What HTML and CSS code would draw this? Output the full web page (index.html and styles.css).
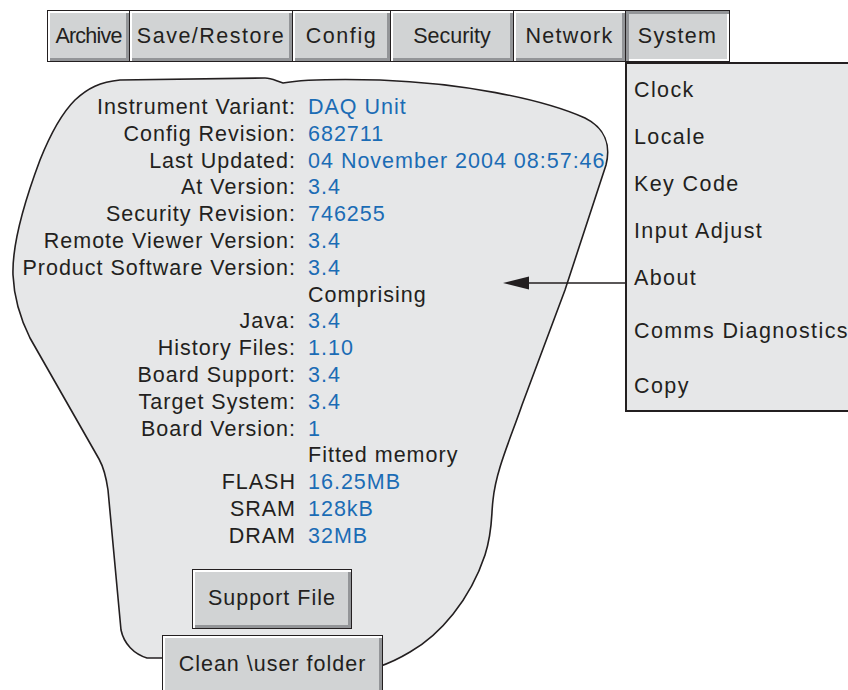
FILE: index.html
```html
<!DOCTYPE html>
<html lang="en">
<head>
  <meta charset="UTF-8">
  <meta name="viewport" content="width=device-width, initial-scale=1.0">
  <title>System - About</title>
  <link rel="stylesheet" href="styles.css">
</head>
<body>
  <div class="screen">
    <!-- callout shape and arrow drawn behind the page content -->
    <svg class="callout" width="848" height="690" viewBox="0 0 848 690">
      <path class="blob" d="M166,658 L147,658 C134,654 124,644 121,630 L108,490 C106,476 104,468 99,459 L30,338 C20,318 14,298 13,275 C12,245 25,200 40,160 C50,135 60,115 75,100 C88,88 100,82 120,80 L265,78 C272,78 276,81 283,83 C300,80 340,79 380,80 C460,83 540,98 585,118 C605,128 611,145 606,165 L565,290 L522,405 C510,440 496,470 493,500 C491,515 493,530 485,555 C470,600 440,635 410,652 C400,658 390,663 378,667 L378,690 L166,690 Z"/>
      <line class="arrow-line" x1="520" y1="283" x2="626" y2="283"/>
      <polygon class="arrow-head" points="503,283 529,276.5 529,289.5"/>
    </svg>

    <nav class="tabs">
      <div class="tab tab-archive">Archive</div>
      <div class="tab tab-save">Save/Restore</div>
      <div class="tab tab-config">Config</div>
      <div class="tab tab-security">Security</div>
      <div class="tab tab-network">Network</div>
      <div class="tab tab-system active">System</div>
    </nav>

    <ul class="menu">
      <li>Clock</li>
      <li>Locale</li>
      <li>Key Code</li>
      <li>Input Adjust</li>
      <li>About</li>
      <li class="comms">Comms Diagnostics</li>
      <li class="copy">Copy</li>
    </ul>

    <main class="about">
      <dl class="info">
        <dt>Instrument Variant:</dt><dd>DAQ Unit</dd>
        <dt>Config Revision:</dt><dd>682711</dd>
        <dt>Last Updated:</dt><dd>04 November 2004 08:57:46</dd>
        <dt>At Version:</dt><dd>3.4</dd>
        <dt>Security Revision:</dt><dd>746255</dd>
        <dt>Remote Viewer Version:</dt><dd>3.4</dd>
        <dt>Product Software Version:</dt><dd>3.4</dd>
        <dt></dt><dd class="heading">Comprising</dd>
        <dt>Java:</dt><dd>3.4</dd>
        <dt>History Files:</dt><dd>1.10</dd>
        <dt>Board Support:</dt><dd>3.4</dd>
        <dt>Target System:</dt><dd>3.4</dd>
        <dt>Board Version:</dt><dd>1</dd>
        <dt></dt><dd class="heading">Fitted memory</dd>
        <dt>FLASH</dt><dd>16.25MB</dd>
        <dt>SRAM</dt><dd>128kB</dd>
        <dt>DRAM</dt><dd>32MB</dd>
      </dl>

      <div class="actions">
        <button class="btn btn-support">Support File</button>
        <button class="btn btn-clean">Clean \user folder</button>
      </div>
    </main>
  </div>
</body>
</html>
```

FILE: styles.css
```css
body {
  margin: 0;
  padding: 0;
  background: #ffffff;
  font-family: "Liberation Sans", Arial, sans-serif;
  color: #231f20;
  overflow: hidden;
}

.screen {
  position: relative;
  z-index: 0;
  width: 848px;
  height: 690px;
  overflow: hidden;
  font-size: 21.5px;
  letter-spacing: 1px;
}

/* callout */
.callout {
  position: absolute;
  top: 0;
  left: 0;
  z-index: -1;
}

.blob {
  fill: #e6e7e8;
  stroke: #231f20;
  stroke-width: 1.6;
}

.arrow-line {
  stroke: #231f20;
  stroke-width: 1.6;
}

.arrow-head {
  fill: #231f20;
}

/* tab bar */
.tabs {
  display: flex;
  margin-left: 47px;
  padding-top: 10px;
  height: 52px;
}

.tab {
  box-sizing: border-box;
  height: 52px;
  border: 1px solid #231f20;
  background: #d1d3d4;
  box-shadow: inset 2px 2px 0 #ffffff, inset -3px -3px 0 #939598;
  display: flex;
  align-items: center;
  justify-content: center;
  letter-spacing: 1.2px;
  margin-left: -1px;
}

.tab:first-child {
  margin-left: 0;
}

.tab.active {
  box-shadow: inset 3px 3px 0 #939598, inset -2px -2px 0 #ffffff;
}

.tab-archive { width: 83px; letter-spacing: -0.8px; }
.tab-save { width: 164px; letter-spacing: 1.5px; }
.tab-config { width: 99px; letter-spacing: 1.6px; }
.tab-security { width: 124px; letter-spacing: 0; }
.tab-network { width: 113px; letter-spacing: 1.3px; }
.tab-system { width: 105px; letter-spacing: 1.3px; }

/* drop-down menu */
.menu {
  position: absolute;
  top: 62px;
  left: 625px;
  width: 240px;
  margin: 0;
  padding: 3px 0 0 0;
  list-style: none;
  background: #e6e7e8;
  border: 2px solid #231f20;
  border-right: none;
  box-sizing: border-box;
  height: 350px;
  letter-spacing: 1.4px;
}

.menu li {
  height: 47px;
  line-height: 47px;
  padding-left: 7px;
  white-space: nowrap;
}

.menu .comms {
  margin-top: 6px;
}

.menu .copy {
  margin-top: 8px;
}

/* about panel */
.about {
  display: flex;
  flex-direction: column;
}

.info {
  display: grid;
  grid-template-columns: 296px auto;
  column-gap: 12px;
  margin: 32px 0 0 0;
  line-height: 26.8px;
}

.info dt {
  text-align: right;
  white-space: nowrap;
}

.info dd {
  margin: 0;
  color: #1b6cb5;
  white-space: nowrap;
}

.info dd.heading {
  color: #231f20;
}

.actions {
  display: flex;
  flex-direction: column;
  align-items: flex-start;
}

.btn {
  box-sizing: border-box;
  font-family: inherit;
  font-size: inherit;
  letter-spacing: 1px;
  color: #231f20;
  padding: 0;
  border: 1px solid #231f20;
  background: #d1d3d4;
  box-shadow: inset 2px 2px 0 #ffffff, inset -3px -3px 0 #939598;
}

.btn-support {
  margin: 19px 0 0 192px;
  width: 160px;
  height: 60px;
}

.btn-clean {
  margin: 6px 0 0 162px;
  width: 221px;
  height: 60px;
}
```
